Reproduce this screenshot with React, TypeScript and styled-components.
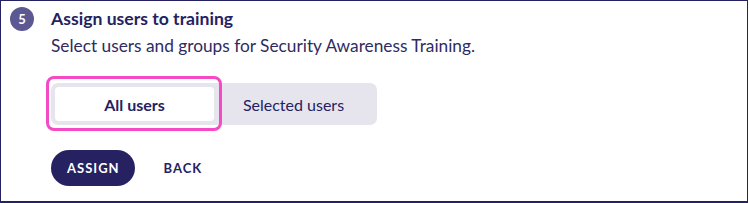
import React, { useState } from "react";
import styled, { createGlobalStyle } from "styled-components";

const navy = "#262160";

const GlobalStyle = createGlobalStyle`
  html, body {
    margin: 0;
    padding: 0;
    background: #ffffff;
  }
  * {
    box-sizing: border-box;
  }
`;

const Card = styled("div")`
  width: 748px;
  height: 203px;
  border: 1px solid ${navy};
  border-bottom-width: 2px;
  background: #ffffff;
  padding: 6px 0 0 9px;
  font-family: "Lato", "Liberation Sans", sans-serif;
  color: ${navy};
`;

const HeaderRow = styled("div")`
  display: flex;
  align-items: center;
  gap: 17px;
`;

const StepBadge = styled("div")`
  width: 24px;
  height: 24px;
  border-radius: 50%;
  background: #5c5891;
  color: #ffffff;
  font-size: 13px;
  font-weight: 700;
  display: flex;
  align-items: center;
  justify-content: center;
`;

const Title = styled("h2")`
  margin: 0;
  font-size: 17.6px;
  line-height: 24px;
  font-weight: 700;
  color: ${navy};
`;

const Body = styled("div")`
  margin-left: 41px;
`;

const Subtitle = styled("p")`
  margin: 4px 0 0;
  font-size: 17.3px;
  line-height: 22px;
  color: #2f2b62;
`;

const Segmented = styled("div")`
  margin-top: 26px;
  display: inline-flex;
  padding: 4px;
  background: #e6e5ee;
  border-radius: 7px;
`;

const Segment = styled("button")<{ $active?: boolean }>`
  position: relative;
  width: 159px;
  height: 34px;
  border: none;
  border-radius: 4px;
  font-family: inherit;
  font-size: 16px;
  cursor: pointer;
  color: ${navy};
  background: ${(p) => (p.$active ? "#ffffff" : "transparent")};
  font-weight: ${(p) => (p.$active ? 700 : 400)};

  &::after {
    content: "";
    display: ${(p) => (p.$active ? "block" : "none")};
    position: absolute;
    top: -11px;
    bottom: -10px;
    left: -9px;
    right: -8px;
    border: 3px solid #f54ac6;
    border-radius: 8px;
    pointer-events: none;
  }
`;

const Actions = styled("div")`
  margin-top: 25px;
  display: flex;
  align-items: center;
  gap: 13px;
`;

const Button = styled("button")<{ $primary?: boolean }>`
  height: 36px;
  padding: 0 15px 0 16px;
  border: none;
  border-radius: 18px;
  font-family: inherit;
  font-size: 13px;
  font-weight: 700;
  letter-spacing: 1px;
  text-transform: uppercase;
  cursor: pointer;
  background: ${(p) => (p.$primary ? navy : "transparent")};
  color: ${(p) => (p.$primary ? "#ffffff" : navy)};
`;

export default function App() {
  const [mode, setMode] = useState<"all" | "selected">("all");

  return (
    <>
      <GlobalStyle />
      <Card>
        <HeaderRow>
          <StepBadge>5</StepBadge>
          <Title>Assign users to training</Title>
        </HeaderRow>
        <Body>
          <Subtitle>
            Select users and groups for Security Awareness Training.
          </Subtitle>
          <Segmented>
            <Segment $active={mode === "all"} onClick={() => setMode("all")}>
              All users
            </Segment>
            <Segment
              $active={mode === "selected"}
              onClick={() => setMode("selected")}
            >
              Selected users
            </Segment>
          </Segmented>
          <Actions>
            <Button $primary>Assign</Button>
            <Button>Back</Button>
          </Actions>
        </Body>
      </Card>
    </>
  );
}
